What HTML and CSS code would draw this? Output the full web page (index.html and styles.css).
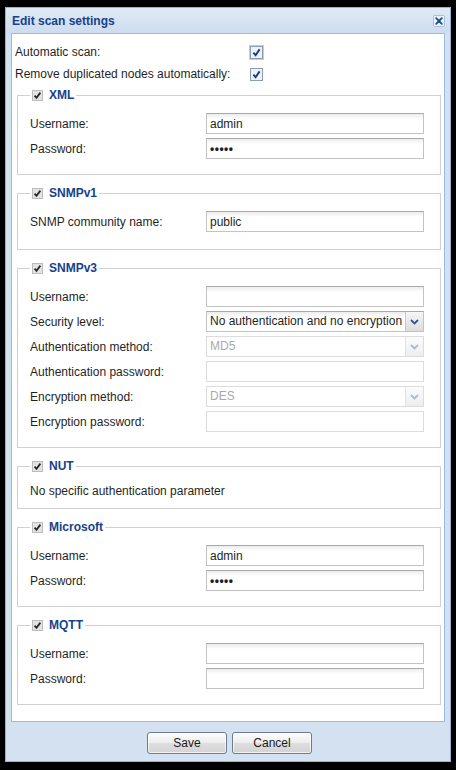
FILE: index.html
```html
<!DOCTYPE html>
<html lang="en">
<head>
<meta charset="utf-8">
<title>Edit scan settings</title>
<link rel="stylesheet" href="styles.css">
</head>
<body>
<div class="window">
  <div class="win-header">
    <span class="win-title">Edit scan settings</span>
    <button class="win-close" type="button" aria-label="Close">
      <svg width="12" height="12" viewBox="0 0 12 12"><rect x="0.5" y="0.5" width="11" height="11" rx="1" fill="#e9f0f9" stroke="#a9bfdc"/><path d="M3.2 3.2 L8.8 8.8 M8.8 3.2 L3.2 8.8" stroke="#1d4b8f" stroke-width="1.8" stroke-linecap="round"/></svg>
    </button>
  </div>

  <form class="win-body">
    <div class="opt-row">
      <span class="opt-label">Automatic scan:</span>
      <span class="check focused"><svg width="13" height="13" viewBox="0 0 13 13"><rect x="0.5" y="0.5" width="12" height="12" fill="#eef1f5" stroke="#8d9db4"/><path d="M3.4 6.6 L5.6 9.2 L9.6 3.4" fill="none" stroke="#1b3b80" stroke-width="1.9"/></svg></span>
    </div>
    <div class="opt-row">
      <span class="opt-label">Remove duplicated nodes automatically:</span>
      <span class="check"><svg width="13" height="13" viewBox="0 0 13 13"><rect x="0.5" y="0.5" width="12" height="12" fill="#eef1f5" stroke="#8d9db4"/><path d="M3.4 6.6 L5.6 9.2 L9.6 3.4" fill="none" stroke="#1b3b80" stroke-width="1.9"/></svg></span>
    </div>

    <fieldset class="group first">
      <legend><span class="legend-check"><svg width="11" height="11" viewBox="0 0 11 11"><rect x="0.5" y="0.5" width="10" height="10" fill="#e3e3e3" stroke="#bcbcbc"/><path d="M2.6 5.6 L4.5 7.9 L8.4 2.6" fill="none" stroke="#2b2b2b" stroke-width="1.8"/></svg></span>XML</legend>
      <div class="field"><label>Username:</label><input class="text" type="text" value="admin"></div>
      <div class="field"><label>Password:</label><input class="text" type="password" value="admin"></div>
    </fieldset>

    <fieldset class="group snmpv1">
      <legend><span class="legend-check"><svg width="11" height="11" viewBox="0 0 11 11"><rect x="0.5" y="0.5" width="10" height="10" fill="#e3e3e3" stroke="#bcbcbc"/><path d="M2.6 5.6 L4.5 7.9 L8.4 2.6" fill="none" stroke="#2b2b2b" stroke-width="1.8"/></svg></span>SNMPv1</legend>
      <div class="field"><label>SNMP community name:</label><input class="text" type="text" value="public"></div>
    </fieldset>

    <fieldset class="group">
      <legend><span class="legend-check"><svg width="11" height="11" viewBox="0 0 11 11"><rect x="0.5" y="0.5" width="10" height="10" fill="#e3e3e3" stroke="#bcbcbc"/><path d="M2.6 5.6 L4.5 7.9 L8.4 2.6" fill="none" stroke="#2b2b2b" stroke-width="1.8"/></svg></span>SNMPv3</legend>
      <div class="field"><label>Username:</label><input class="text" type="text" value=""></div>
      <div class="field"><label>Security level:</label>
        <div class="combo"><span class="combo-value">No authentication and no encryption</span><span class="trigger"><svg width="9" height="6" viewBox="0 0 9 6"><path d="M1 1 L4.5 4.5 L8 1" fill="none" stroke="#34558c" stroke-width="1.8"/></svg></span></div>
      </div>
      <div class="field"><label>Authentication method:</label>
        <div class="combo disabled"><span class="combo-value">MD5</span><span class="trigger"><svg width="9" height="6" viewBox="0 0 9 6"><path d="M1 1 L4.5 4.5 L8 1" fill="none" stroke="#a9bad3" stroke-width="1.8"/></svg></span></div>
      </div>
      <div class="field"><label>Authentication password:</label><input class="text" type="password" value="" disabled></div>
      <div class="field"><label>Encryption method:</label>
        <div class="combo disabled"><span class="combo-value">DES</span><span class="trigger"><svg width="9" height="6" viewBox="0 0 9 6"><path d="M1 1 L4.5 4.5 L8 1" fill="none" stroke="#a9bad3" stroke-width="1.8"/></svg></span></div>
      </div>
      <div class="field"><label>Encryption password:</label><input class="text" type="password" value="" disabled></div>
    </fieldset>

    <fieldset class="group nut">
      <legend><span class="legend-check"><svg width="11" height="11" viewBox="0 0 11 11"><rect x="0.5" y="0.5" width="10" height="10" fill="#e3e3e3" stroke="#bcbcbc"/><path d="M2.6 5.6 L4.5 7.9 L8.4 2.6" fill="none" stroke="#2b2b2b" stroke-width="1.8"/></svg></span>NUT</legend>
      <p class="note">No specific authentication parameter</p>
    </fieldset>

    <fieldset class="group">
      <legend><span class="legend-check"><svg width="11" height="11" viewBox="0 0 11 11"><rect x="0.5" y="0.5" width="10" height="10" fill="#e3e3e3" stroke="#bcbcbc"/><path d="M2.6 5.6 L4.5 7.9 L8.4 2.6" fill="none" stroke="#2b2b2b" stroke-width="1.8"/></svg></span>Microsoft</legend>
      <div class="field"><label>Username:</label><input class="text" type="text" value="admin"></div>
      <div class="field"><label>Password:</label><input class="text" type="password" value="admin"></div>
    </fieldset>

    <fieldset class="group">
      <legend><span class="legend-check"><svg width="11" height="11" viewBox="0 0 11 11"><rect x="0.5" y="0.5" width="10" height="10" fill="#e3e3e3" stroke="#bcbcbc"/><path d="M2.6 5.6 L4.5 7.9 L8.4 2.6" fill="none" stroke="#2b2b2b" stroke-width="1.8"/></svg></span>MQTT</legend>
      <div class="field"><label>Username:</label><input class="text" type="text" value=""></div>
      <div class="field"><label>Password:</label><input class="text" type="password" value=""></div>
    </fieldset>
  </form>

  <div class="win-footer">
    <button class="btn" type="button">Save</button>
    <button class="btn" type="button">Cancel</button>
  </div>
</div>
</body>
</html>
```

FILE: styles.css
```css
* {
  box-sizing: border-box;
}

body {
  margin: 0;
  background: #000;
  font: 12px "Liberation Sans", Arial, sans-serif;
  color: #1f1f1f;
}

/* dialog frame */
.window {
  width: 446px;
  height: 755px;
  margin: 7px 5px 0;
  background: #d3e1f1;
  border: 1px solid #9ab3d5;
  display: flex;
  flex-direction: column;
}

.win-header {
  flex: none;
  height: 25px;
  display: flex;
  align-items: center;
  justify-content: space-between;
  padding: 0 5px 0 6px;
  background: linear-gradient(#e0eaf6, #cddcef);
}

.win-title {
  font-weight: bold;
  color: #15428b;
}

.win-close {
  display: block;
  width: 12px;
  height: 12px;
  padding: 0;
  border: 0;
  background: none;
}

.win-close svg {
  display: block;
}

/* white form panel */
.win-body {
  flex: none;
  margin: 0 5px;
  background: #fff;
  border: 1px solid #99bbe8;
  padding: 7px 0 16px 3px;
}

.opt-row {
  display: flex;
  align-items: center;
  height: 22px;
}

.opt-label {
  width: 235px;
}

.check {
  display: block;
  width: 13px;
  height: 13px;
}

.check svg {
  display: block;
}

.check.focused {
  box-shadow: 0 0 0 1px #b7cff0;
}

/* grouped settings */
fieldset.group {
  min-width: 0;
  margin: 10px 3px 0 2px;
  padding: 8px 16px 13px 12px;
  border: 1px solid #d0d0d0;
}

fieldset.group.first {
  margin-top: 2px;
}

fieldset.snmpv1 {
  padding-bottom: 15px;
}

fieldset.nut {
  padding-bottom: 8px;
}

legend {
  display: flex;
  align-items: center;
  gap: 6px;
  height: 16px;
  padding: 0 2px;
  font-weight: bold;
  color: #15428b;
}

.legend-check svg {
  display: block;
}

.note {
  margin: 0;
  line-height: 18px;
}

.field {
  display: flex;
  align-items: center;
  height: 25px;
}

.field label {
  width: 176px;
  flex: none;
}

.text {
  width: 218px;
  height: 21px;
  margin: 0;
  padding: 0 3px;
  font: inherit;
  color: #1f1f1f;
  border: 1px solid #c3c3c3;
  border-top-color: #a9a9a9;
  background: linear-gradient(#ececec, #fff 5px);
  outline: none;
}

.text[type="password"] {
  font-weight: bold;
  letter-spacing: 0.5px;
}

.text:disabled {
  border-color: #dcdcdc;
  background: #fff;
}

/* combo box with drop trigger */
.combo {
  width: 218px;
  height: 21px;
  display: flex;
  border: 1px solid #c3c3c3;
  border-top-color: #a9a9a9;
  background: linear-gradient(#ececec, #fff 5px);
}

.combo-value {
  flex: 1;
  padding: 0 3px;
  line-height: 19px;
  white-space: nowrap;
  overflow: hidden;
}

.trigger {
  flex: none;
  width: 18px;
  display: flex;
  align-items: center;
  justify-content: center;
  border-left: 1px solid #c8c8c8;
  background: linear-gradient(#f6f6f6, #dcdcdc);
}

.combo.disabled {
  border-color: #dcdcdc;
  background: #fff;
}

.combo.disabled .combo-value {
  color: #a9a9a9;
}

.combo.disabled .trigger {
  border-left-color: #e2e2e2;
  background: linear-gradient(#fbfbfb, #eeeeee);
}

/* button bar */
.win-footer {
  flex: 1;
  display: flex;
  justify-content: center;
  align-items: flex-start;
  gap: 5px;
  padding: 10px 0 0 3px;
}

.btn {
  width: 80px;
  height: 22px;
  padding: 0;
  font: inherit;
  color: #1a1a1a;
  border: 1px solid #6c7b93;
  border-radius: 3px;
  background: linear-gradient(#fdfdfd, #ededed 48%, #dedede 52%, #d3d3d3);
  box-shadow: inset 0 0 0 1px rgba(255, 255, 255, 0.7);
}
```
